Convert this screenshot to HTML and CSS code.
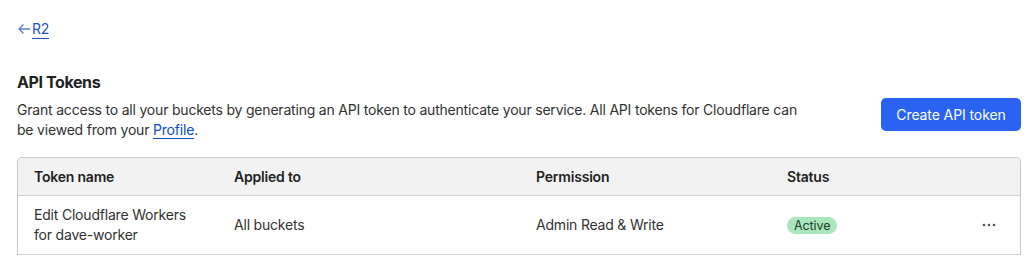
FILE: index.html
```html
<!DOCTYPE html>
<html>
<head>
<meta charset="utf-8">
<link rel="stylesheet" href="styles.css">
</head>
<body>
<div class="page">
  <a class="back" href="#"><svg class="back-arrow" width="14" height="12" viewBox="0 0 14 12"><path d="M13 6H2M6.5 1.5L2 6l4.5 4.5" fill="none" stroke="currentColor" stroke-width="1.3"/></svg><span class="back-text">R2</span></a>
  <h2 class="title">API Tokens</h2>
  <div class="intro">
    <p class="desc">Grant access to all your buckets by generating an API token to authenticate your service. All API tokens for Cloudflare can be viewed from your <a class="link" href="#">Profile</a>.</p>
    <button class="btn">Create API token</button>
  </div>
  <div class="table">
    <div class="row head">
      <div class="cell">Token name</div>
      <div class="cell">Applied to</div>
      <div class="cell">Permission</div>
      <div class="cell">Status</div>
      <div class="cell"></div>
    </div>
    <div class="row body">
      <div class="cell">Edit Cloudflare Workers<br>for dave-worker</div>
      <div class="cell">All buckets</div>
      <div class="cell">Admin Read &amp; Write</div>
      <div class="cell"><span class="badge">Active</span></div>
      <div class="cell dots"><svg width="14" height="4" viewBox="0 0 14 4"><circle cx="2" cy="2" r="1.3"/><circle cx="7" cy="2" r="1.3"/><circle cx="12" cy="2" r="1.3"/></svg></div>
    </div>
  </div>
</div>
</body>
</html>
```
FILE: styles.css
```css
html, body { margin: 0; padding: 0; background: #fff; }
body { font-family: Inter, "Noto Sans", sans-serif; color: #313131; font-size: 14px; line-height: 20px; letter-spacing: -0.2px; }
.page { padding: 19px 13px 0 17px; }
.back { display: inline-flex; align-items: center; gap: 1px; text-decoration: none; color: #2453c4; height: 20px; }
.back-arrow { color: #5b7fd8; margin-left: 0; }
.back-text { border-bottom: 1px solid #2453c4; line-height: 19px; }
.title { margin: 31px 0 0; font-size: 16px; line-height: 22px; font-weight: 700; color: #222; letter-spacing: -0.4px; }
.intro { display: flex; justify-content: space-between; align-items: flex-start; margin-top: 5px; }
.desc { margin: 2px 0 0; width: 800px; color: #313131; }
.link { color: #0a4fc4; text-decoration: none; border-bottom: 1px solid #0a4fc4; }
.btn { width: 140px; height: 33px; border: none; border-radius: 5px; background: #2a63f2; color: #fff; font-family: inherit; font-size: 14px; letter-spacing: -0.1px; padding: 0; }
.table { margin-top: 17px; border: 1px solid #c8c8c8; border-bottom: none; border-radius: 5px 5px 0 0; overflow: hidden; }
.row { display: grid; grid-template-columns: 200px 302px 251px 187px 1fr; align-items: center; border-bottom: 1px solid #d0d0d0; }
.cell { padding-left: 16px; }
.head { height: 37px; background: #f2f2f2; font-weight: 600; color: #222; }
.body { height: 58px; }
.badge { display: inline-block; background: #a9e5bd; color: #1f3d2a; border-radius: 9px; padding: 0 7px; height: 17px; line-height: 17px; font-size: 12.5px; letter-spacing: -0.1px; }
.dots { padding-left: 24px; display: flex; align-items: center; color: #555; }
.dots svg { fill: currentColor; }
```
